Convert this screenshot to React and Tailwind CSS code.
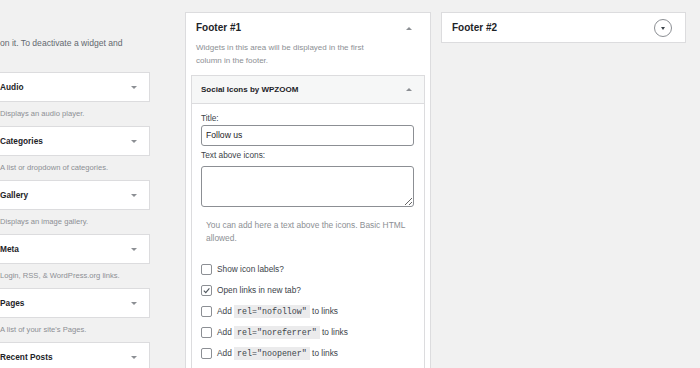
import React from 'react';

const DownArrow = () => (
  <span className="w-0 h-0 border-l-[3px] border-r-[3px] border-t-[3.5px] border-l-transparent border-r-transparent border-t-[#8c8f94]"></span>
);

const UpArrow = () => (
  <span className="w-0 h-0 border-l-[3px] border-r-[3px] border-b-[3.5px] border-l-transparent border-r-transparent border-b-[#8c8f94]"></span>
);

const Checkbox = ({ checked }) => (
  <span className="w-[11px] h-[11px] shrink-0 rounded-[2px] border border-[#8c8f94] bg-white flex items-center justify-center">
    {checked && (
      <svg width="9" height="9" viewBox="0 0 10 10">
        <path d="M2 5.2 L4.2 7.3 L8.2 2.6" fill="none" stroke="#50575e" strokeWidth="1.3" />
      </svg>
    )}
  </span>
);

const Code = ({ children }) => (
  <code className="bg-[#ebebec] px-[3px] py-[2px] font-['Liberation_Mono',monospace] text-[8.3px] text-[#3c434a]">{children}</code>
);

const App = () => {
  const widgets = [
    { title: 'Audio', desc: 'Displays an audio player.' },
    { title: 'Categories', desc: 'A list or dropdown of categories.' },
    { title: 'Gallery', desc: 'Displays an image gallery.' },
    { title: 'Meta', desc: 'Login, RSS, & WordPress.org links.' },
    { title: 'Pages', desc: "A list of your site's Pages." },
    { title: 'Recent Posts', desc: '' },
  ];

  return (
    <div className="w-[700px] h-[368px] overflow-hidden bg-[#f1f1f1] flex items-start font-['Liberation_Sans',Arial,sans-serif] text-[#1d2327]">

      {/* Available widgets */}
      <div className="w-[150px] shrink-0 overflow-hidden">
        <div className="-ml-[10px] w-[160px] pt-[37px]">
          <p className="pl-[10px] text-[8.6px] leading-[13px] text-[#646970] whitespace-nowrap">on it. To deactivate a widget and</p>
          <div className="mt-[22px]">
            {widgets.map((w) => (
              <div key={w.title}>
                <div className="h-[30px] bg-white border border-[#dcdcde] flex items-center justify-between pl-[9px] pr-[12px]">
                  <span className="text-[8.3px] font-bold text-[#1d2327]">{w.title}</span>
                  <DownArrow />
                </div>
                {w.desc && (
                  <div className="h-[24px] pl-[10px] flex items-center text-[7.6px] text-[#8c8f94] whitespace-nowrap">{w.desc}</div>
                )}
              </div>
            ))}
          </div>
        </div>
      </div>

      {/* Footer #1 */}
      <div className="ml-[35px] mt-[12px] w-[246px] h-[400px] shrink-0 bg-white border border-[#dcdcde] px-[5px]">
        <div className="pt-[8px] px-[5px]">
          <div className="flex items-center justify-between h-[14px] pr-[8px]">
            <span className="text-[10px] font-bold leading-[14px]">Footer #1</span>
            <UpArrow />
          </div>
          <p className="mt-[6px] text-[8px] leading-[13px] text-[#8c8f94]">
            Widgets in this area will be displayed in the first<br />column in the footer.
          </p>
        </div>

        <div className="mt-[8px] border border-[#dcdcde] h-[320px]">
          <div className="h-[28px] bg-[#f6f7f7] border-b border-[#dcdcde] flex items-center justify-between pl-[9px] pr-[12px]">
            <span className="text-[8px] font-bold">Social Icons by WPZOOM</span>
            <UpArrow />
          </div>

          <div className="px-[9px] pt-[8px] text-[8.3px] text-[#3c434a]">
            <label className="block leading-[13px]">Title:</label>
            <div className="h-[21px] w-[213px] border border-[#8c8f94] rounded-[3px] flex items-center px-[4px] text-[8.6px] text-[#1d2327]">Follow us</div>

            <label className="block mt-[3px] leading-[13px]">Text above icons:</label>
            <textarea className="block mt-[4px] h-[41px] w-[213px] border border-[#8c8f94] rounded-[3px] bg-white" readOnly></textarea>

            <p className="mt-[12px] pl-[5px] text-[8.4px] leading-[13px] text-[#8c8f94]">
              You can add here a text above the icons. Basic HTML<br />allowed.
            </p>

            <div className="mt-[14px]">
              <div className="h-[21px] flex items-center gap-[5px]">
                <Checkbox />
                <span>Show icon labels?</span>
              </div>
              <div className="h-[21px] flex items-center gap-[5px]">
                <Checkbox checked />
                <span>Open links in new tab?</span>
              </div>
              <div className="h-[21px] flex items-center gap-[5px]">
                <Checkbox />
                <span>Add <Code>rel="nofollow"</Code> to links</span>
              </div>
              <div className="h-[21px] flex items-center gap-[5px]">
                <Checkbox />
                <span>Add <Code>rel="noreferrer"</Code> to links</span>
              </div>
              <div className="h-[21px] flex items-center gap-[5px]">
                <Checkbox />
                <span>Add <Code>rel="noopener"</Code> to links</span>
              </div>
            </div>
          </div>
        </div>
      </div>

      {/* Footer #2 */}
      <div className="ml-[10px] mt-[12px] w-[245px] h-[31px] shrink-0 bg-white border border-[#dcdcde] flex items-center justify-between pl-[10px] pr-[13px]">
        <span className="text-[10px] font-bold">Footer #2</span>
        <span className="w-[18px] h-[18px] rounded-full border-[1.5px] border-[#8c8f94] flex items-center justify-center pt-[1px]">
          <span className="w-0 h-0 border-l-[2.5px] border-r-[2.5px] border-t-[3.5px] border-l-transparent border-r-transparent border-t-[#3c434a]"></span>
        </span>
      </div>
    </div>
  );
};

export default App;
